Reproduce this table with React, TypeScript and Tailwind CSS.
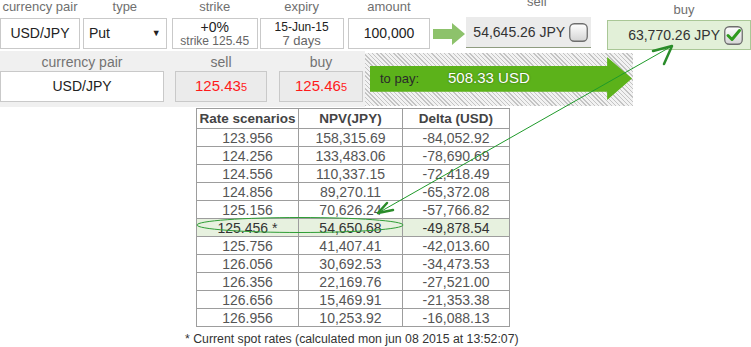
import React from "react";

const font = { fontFamily: '"Liberation Sans", Arial, sans-serif' };

function CheckBox({ checked }: { checked?: boolean }) {
  return (
    <svg width="19" height="19" viewBox="0 0 19 19" className="shrink-0">
      <defs>
        <linearGradient id={checked ? "cbg1" : "cbg2"} x1="0" y1="0" x2="0" y2="1">
          <stop offset="0" stopColor="#ffffff" />
          <stop offset="1" stopColor="#d4d4d4" />
        </linearGradient>
      </defs>
      <rect x="0.75" y="0.75" width="17.5" height="17.5" rx="4.5" fill={`url(#${checked ? "cbg1" : "cbg2"})`} stroke="#6e6e6e" strokeWidth="1.3" />
      {checked && (
        <path d="M4 9.5 L8 13.5 L15.5 4.5" fill="none" stroke="#2f9a1e" strokeWidth="3" strokeLinecap="round" strokeLinejoin="round" />
      )}
    </svg>
  );
}

function Price({ main, small }: { main: string; small: string }) {
  return (
    <span className="text-[#ff1a1a] text-[15px]">
      {main}
      <span className="text-[11px]">{small}</span>
    </span>
  );
}

const rows: [string, string, string][] = [
  ["123.956", "158,315.69", "-84,052.92"],
  ["124.256", "133,483.06", "-78,690.69"],
  ["124.556", "110,337.15", "-72,418.49"],
  ["124.856", "89,270.11", "-65,372.08"],
  ["125.156", "70,626.24", "-57,766.82"],
  ["125.456 *", "54,650.68", "-49,878.54"],
  ["125.756", "41,407.41", "-42,013.60"],
  ["126.056", "30,692.53", "-34,473.53"],
  ["126.356", "22,169.76", "-27,521.00"],
  ["126.656", "15,469.91", "-21,353.38"],
  ["126.956", "10,253.92", "-16,088.13"],
];

export default function App() {
  const label = "h-[18px] leading-[14px] text-center text-[13px] text-[#6f6f6f]";
  const box = "h-[31px] border border-[#c9c9c9] bg-white flex items-center justify-center";
  return (
    <div className="relative w-[751px] h-[347px] bg-white overflow-hidden text-[#222]" style={font}>
      {/* Row 1 */}
      <div className="flex items-start h-[51px]">
        <div className="w-[80px]">
          <div className={label}>currency pair</div>
          <div className={`${box} text-[14px]`}>USD/JPY</div>
        </div>
        <div className="w-[84px] ml-[3px]">
          <div className={label}>type</div>
          <div className={`${box} !justify-between px-[5px] text-[14px]`}>
            <span>Put</span>
            <span className="text-[9px]">▼</span>
          </div>
        </div>
        <div className="w-[86px] ml-[5px]">
          <div className={label}>strike</div>
          <div className={`${box} flex-col leading-[14px]`}>
            <span className="text-[14px]">+0%</span>
            <span className="text-[12px] text-[#666]">strike 125.45</span>
          </div>
        </div>
        <div className="w-[84px] ml-[2px]">
          <div className={label}>expiry</div>
          <div className={`${box} flex-col leading-[14px]`}>
            <span className="text-[12px]">15-Jun-15</span>
            <span className="text-[13px] text-[#666]">7 days</span>
          </div>
        </div>
        <div className="w-[83px] ml-[4px]">
          <div className={label}>amount</div>
          <div className={`${box} text-[14px]`}>100,000</div>
        </div>
        <svg width="32" height="22" viewBox="0 0 32 22" className="ml-[3px] mt-[23px] shrink-0">
          <polygon points="0,6 19,6 19,0 32,11 19,22 19,16 0,16" fill="#8dc26b" />
        </svg>
        <div className="w-[125px] ml-[1px] -mt-[1px]">
          <div className="h-[18px] leading-[6px] text-center pl-[16px] text-[13px] text-[#6f6f6f]">sell</div>
          <div className="h-[31px] bg-[#ebebeb] border-b border-[#8f9c80] flex items-center justify-end pr-[3px] gap-[4px] text-[14px] text-[#333]">
            <span>54,645.26 JPY</span>
            <CheckBox />
          </div>
        </div>
        <div className="w-[144px] ml-[16px]">
          <div className="h-[20px] leading-[20px] text-center pl-[10px] text-[13px] text-[#6f6f6f]">buy</div>
          <div className="h-[30px] bg-[#e2f0d8] border border-[#a9c796] flex items-center justify-end pr-[7px] gap-[4px] text-[14px] text-[#333]">
            <span>63,770.26 JPY</span>
            <CheckBox checked />
          </div>
        </div>
      </div>

      {/* Row 2 */}
      <div className="flex items-start h-[57px]">
        <div className="w-[365px] h-[56px] bg-[#f0f0f0] flex items-start">
          <div className="w-[164px]">
            <div className="h-[20px] leading-[22px] text-center text-[14px] text-[#737373]">currency pair</div>
            <div className={`${box} text-[14px]`}>USD/JPY</div>
          </div>
          <div className="w-[92px] ml-[11px]">
            <div className="h-[20px] leading-[22px] text-center text-[14px] text-[#737373]">sell</div>
            <div className="h-[31px] border border-[#c9c9c9] bg-[#ebebeb] flex items-center justify-center">
              <Price main="125.43" small="5" />
            </div>
          </div>
          <div className="w-[84px] ml-[12px]">
            <div className="h-[20px] leading-[22px] text-center text-[14px] text-[#737373]">buy</div>
            <div className="h-[31px] border border-[#c9c9c9] bg-[#ebebeb] flex items-center justify-center">
              <Price main="125.46" small="5" />
            </div>
          </div>
        </div>
        <div className="w-[268px] h-[53px] mt-[2px] bg-[repeating-linear-gradient(45deg,#c4c4c4_0px,#c4c4c4_1px,#f2f2f2_1px,#f2f2f2_3px)] pt-[4px] pl-[5px]">
          <div className="w-[262px] h-[43px] bg-[#5cb21a] [clip-path:polygon(0_21%,90.5%_21%,90.5%_0,100%_50%,90.5%_100%,90.5%_81%,0_81%)] flex items-center">
            <span className="ml-[10px] text-[13px] text-[#2a2a2a]">to pay:</span>
            <span className="ml-[29px] text-[15px] text-white [text-shadow:0_0_2px_rgba(0,0,0,0.45)]">508.33 USD</span>
          </div>
        </div>
      </div>

      {/* Table */}
      <table className="ml-[196px] w-[313px] border-collapse text-[14px] text-[#555] table-fixed">
        <colgroup>
          <col className="w-[102px]" />
          <col className="w-[104px]" />
          <col className="w-[107px]" />
        </colgroup>
        <thead>
          <tr className="h-[20px]">
            <th className="border border-[#9d9d9d] text-[13.5px] font-bold text-[#444] leading-[18px] p-0">Rate scenarios</th>
            <th className="border border-[#9d9d9d] text-[13.5px] font-bold text-[#444] leading-[18px] p-0">NPV(JPY)</th>
            <th className="border border-[#9d9d9d] text-[13.5px] font-bold text-[#444] leading-[18px] p-0">Delta (USD)</th>
          </tr>
        </thead>
        <tbody>
          {rows.map((r, i) => (
            <tr key={i} className={`h-[18px] ${i === 5 ? "bg-[#e7f1df] text-[#333]" : ""}`}>
              {r.map((c, j) => (
                <td key={j} className="border border-[#9d9d9d] text-center leading-[16px] p-0">
                  {c}
                </td>
              ))}
            </tr>
          ))}
        </tbody>
      </table>

      <div className="mt-[5px] ml-[185px] text-[12.3px] leading-[14px] text-[#333]">
        * Current spot rates (calculated mon jun 08 2015 at 13:52:07)
      </div>

      {/* Annotation overlay */}
      <svg className="absolute left-0 top-0 pointer-events-none" width="751" height="347" viewBox="0 0 751 347">
        <ellipse cx="300" cy="225" rx="103" ry="7.5" fill="none" stroke="#2f9e35" strokeWidth="1" />
        <line x1="378" y1="213" x2="672" y2="46" stroke="#1f9a2a" strokeWidth="1" />
        <path d="M387 203 L378 213 L393 210" fill="none" stroke="#2a8c2a" strokeWidth="2.5" strokeLinecap="round" strokeLinejoin="round" />
        <path d="M653 51 L672 46 L664 64" fill="none" stroke="#2a8c2a" strokeWidth="2.5" strokeLinecap="round" strokeLinejoin="round" />
      </svg>
    </div>
  );
}
